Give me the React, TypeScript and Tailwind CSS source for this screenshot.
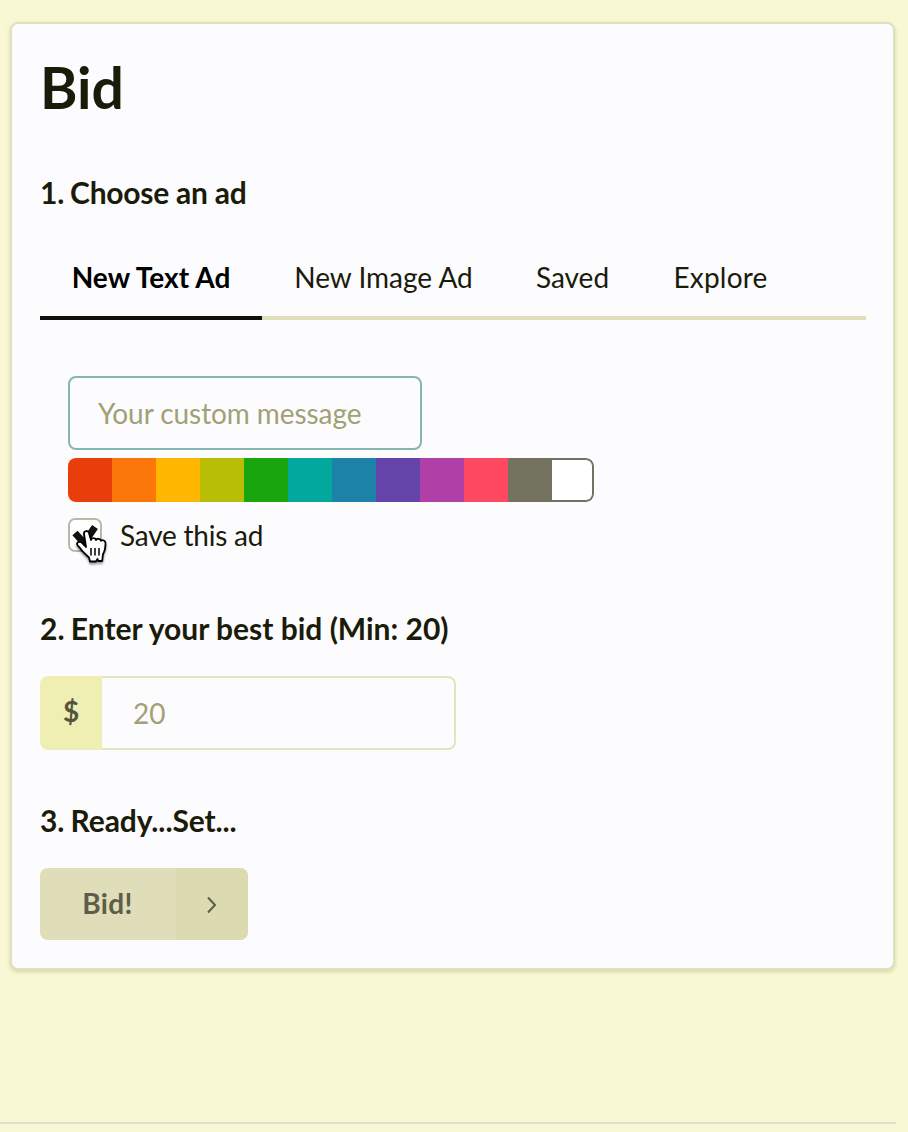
import React from "react";

const colors = [
  "bg-[#e93d0c]", "bg-[#fb770a]", "bg-[#ffb600]", "bg-[#b8bd06]",
  "bg-[#19a50e]", "bg-[#02a79d]", "bg-[#1c82a8]", "bg-[#6444a8]",
  "bg-[#b040a8]", "bg-[#ff4861]", "bg-[#73735f]",
];

function Heading({ step, className, children }: { step: number; className: string; children: React.ReactNode }) {
  return (
    <h2 className={`text-[30px] leading-[38px] font-bold text-[#1b1b0a] ${className}`}>
      <span className="-mr-px">{step}.</span> {children}
    </h2>
  );
}

function HandPointer() {
  return (
    <svg className="absolute left-[4px] top-[8px] drop-shadow-[0_2px_1px_rgba(0,0,0,0.4)]" width="36" height="38" viewBox="0 0 36 38">
      <path
        d="M12 19L10 6C9.700 2.500 14 2 15 5l2 7c.5-2.500 4.500-2.500 5 0 1-2 4.500-1.500 5 .8 1.500-1.300 4.500-.3 4.500 2.200 0 5-.5 8-2.500 11l-.8 7h-4l-.7-2-1.500 2.500h-6l-1-4C11 26 8 23 6 20c-1.500-2-3.500-3-3-4.500.8-2.500 4-1.800 5.500-.2z"
        fill="#fff"
        stroke="#000"
        strokeWidth="1.800"
        strokeLinejoin="round"
      />
      <path d="M17 20v7.500M21 20v7.500M25 20v7.500" stroke="#000" strokeWidth="1.500" fill="none" />
    </svg>
  );
}

export default function App() {
  return (
    <div className="flex h-[1132px] w-[908px] flex-col overflow-hidden bg-[#f8f8d4] pt-[22px] font-[Lato,sans-serif]">
      <main className="ml-[10px] h-[948px] w-[885px] shrink-0 rounded-[8px] border-2 border-[#e0e0c0] bg-[#fcfcff] px-7 shadow-[0_2px_4px_#d4d4a8]">
        <h1 className="pt-[29px] text-[57px] leading-[68px] font-bold text-[#1b1b0a]">Bid</h1>
        <Heading step={1} className="mt-[52px] tracking-[-0.25px]">Choose an ad</Heading>
        <nav className="mt-[25px] flex h-[84px] w-[826px] border-b-4 border-[#dedebb] text-[28px] leading-[82px] text-[#1b1b0a]">
          <button className="h-[84px] w-[222px] border-b-4 border-[#10100a] font-bold tracking-[0.08px] text-black">New Text Ad</button>
          <button className="h-[82px] w-[243px]">New Image Ad</button>
          <button className="h-[82px] w-[135px]">Saved</button>
          <button className="h-[82px] w-[161px] tracking-[0.2px]">Explore</button>
        </nav>
        <section className="mt-[56px] pl-7">
          <input className="block h-[74px] w-[354px] rounded-[8px] border-2 border-[#85b7b0] bg-transparent px-[28px] text-[28px] tracking-[-0.08px] outline-none placeholder:text-[#a1a174]" placeholder="Your custom message" />
          <div className="mt-2 flex h-11 w-[526px] overflow-hidden rounded-[8px]">
            {colors.map((c) => <button key={c} className={`h-11 w-11 shrink-0 ${c}`} />)}
            <button className="h-11 w-[42px] rounded-r-[8px] border-y-2 border-r-2 border-[#73735f] bg-white" />
          </div>
          <label className="mt-4 flex h-[36px] text-[28px] leading-[34px] tracking-[-0.22px] text-[#1b1b0a]">
            <span className="relative mr-[18px] block h-[34px] w-[34px] rounded-[7px] border-2 border-[#b9b9a8] bg-white">
              <svg className="absolute -left-0.5 -top-0.5" width="34" height="34" viewBox="0 0 34 34">
                <path d="M7 15l9 10L27 9" fill="none" stroke="#111" strokeWidth="7" />
              </svg>
              <HandPointer />
            </span>
            Save this ad
          </label>
        </section>
        <Heading step={2} className="mt-[55px]">Enter your best bid (Min: 20)</Heading>
        <div className="mt-[29px] flex h-[74px]">
          <span className="w-[62px] rounded-l-[8px] bg-[#efefb4] text-center text-[28px] leading-[70px] font-bold text-[#55553f]">$</span>
          <input className="w-[354px] rounded-r-[8px] border-2 border-l-0 border-[#e4e4bc] bg-transparent px-[31px] text-[28px] outline-none placeholder:text-[#a1a174]" placeholder="20" />
        </div>
        <Heading step={3} className="mt-[51px] tracking-[-0.1px]">Ready...Set...</Heading>
        <button className="mt-[29px] flex h-[72px] w-[208px] overflow-hidden rounded-[8px] bg-[#dfdeb9] text-[28px] font-bold text-[#5d5d49]">
          <span className="w-[135px] leading-[71px] tracking-[0.3px]">Bid!</span>
          <span className="ml-px flex h-full w-[72px] items-center justify-center bg-[#dbdab1]">
            <svg width="16" height="20" viewBox="0 0 16 20"><path d="M4 3.500l7 7.500-7 7.500" fill="none" stroke="#5d5d49" strokeWidth="2" /></svg>
          </span>
        </button>
      </main>
      <div className="mt-[152px] h-[2px] w-[896px] shrink-0 bg-[#deded0]" />
    </div>
  );
}
